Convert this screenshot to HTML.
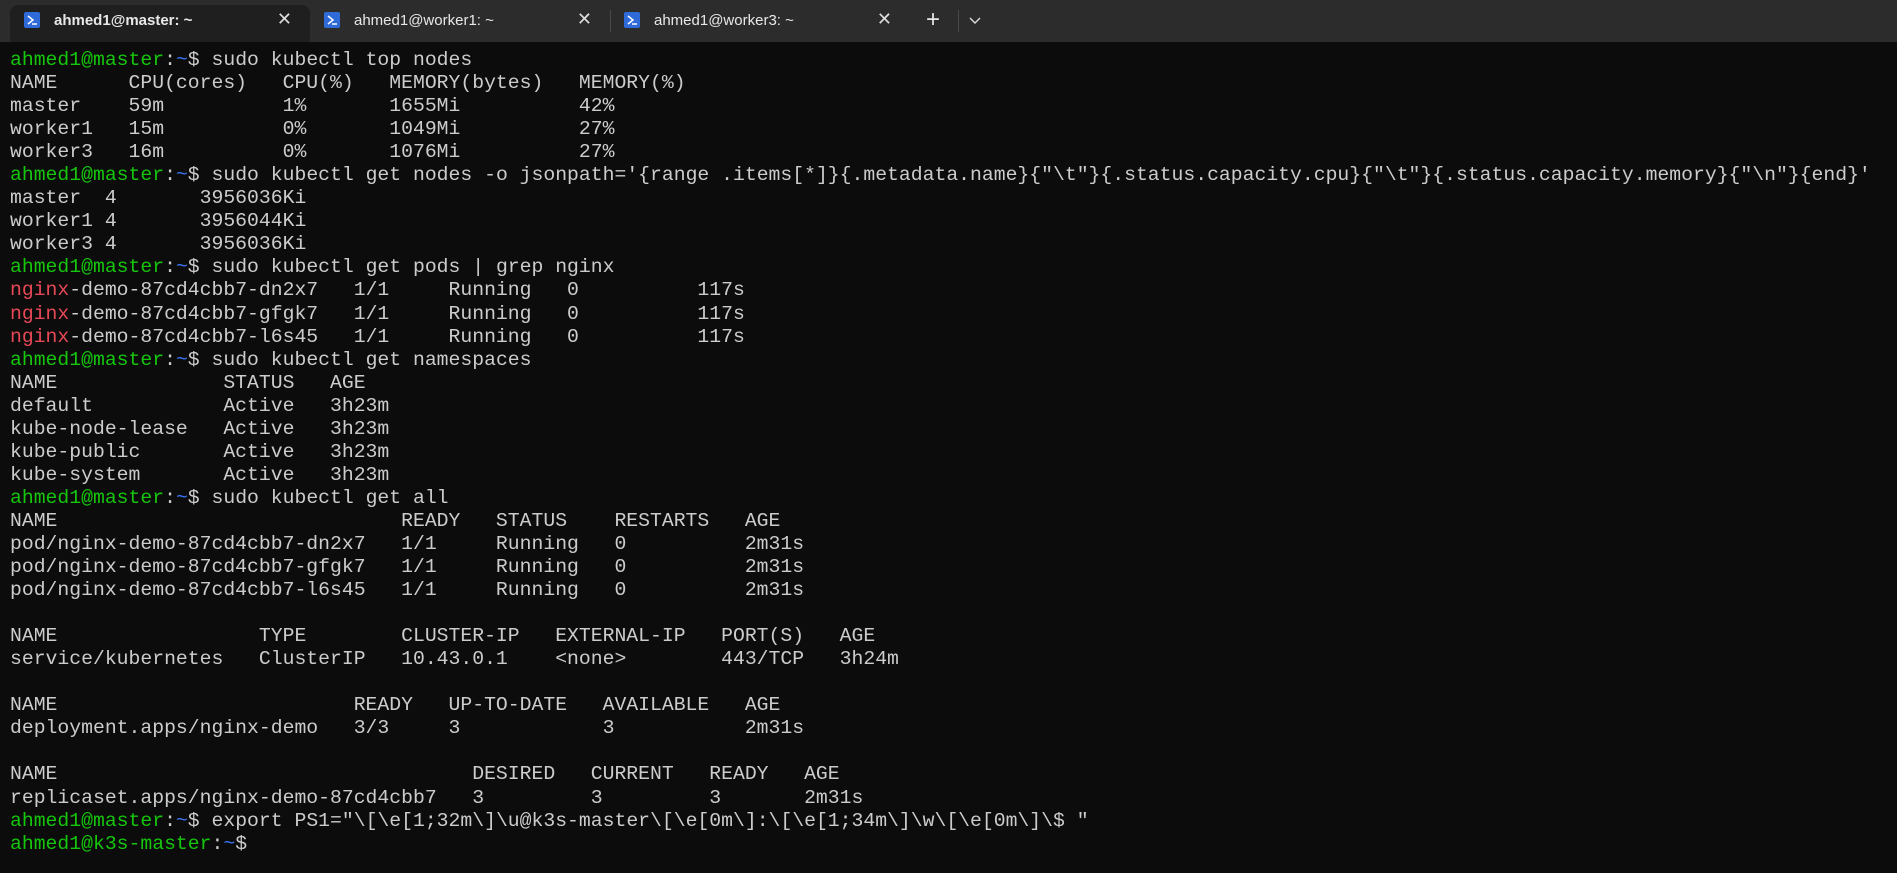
<!DOCTYPE html>
<html><head><meta charset="utf-8"><style>
html,body{margin:0;padding:0;width:1897px;height:873px;overflow:hidden;background:#0c0c0c;}
.bar{position:absolute;left:0;top:0;width:1897px;height:42px;background:#2c2c2c;}
.tab{position:absolute;top:0;height:42px;font-family:"Liberation Sans",sans-serif;font-size:15px;color:#e8e8e8;}
.tab .t{position:absolute;left:44px;top:12px;}
.tab .x{position:absolute;right:18px;top:9px;font-size:18px;color:#ddd;}
.ico{position:absolute;left:14px;top:12px;width:16px;height:16px;background:#2f6bd8;border-radius:2px;}
.ico svg{position:absolute;left:0;top:0}
.act{background:#1f1f1f;border-radius:8px 8px 0 0;top:5px;height:37px;}
.sep{position:absolute;top:10px;width:1px;height:22px;background:#4a4a4a;}
pre{position:absolute;left:10px;top:49px;margin:0;font-family:"Liberation Mono",monospace;font-size:19.75px;line-height:23.05px;color:#cccccc;}
.g{color:#16c60c}.b{color:#3b78ff}.r{color:#e74856}
</style></head><body>
<div class="bar"></div>
<div class="tab act" style="left:10px;width:300px;"><div class="ico" style="top:7px"><svg width="16" height="16"><path d="M4 4l5 4-5 4M8 12h5" stroke="#fff" stroke-width="1.5" fill="none"/></svg></div><span class="t" style="top:7px;font-weight:bold">ahmed1@master: ~</span><span class="x" style="top:4px">✕</span></div>
<div class="tab" style="left:310px;width:300px;"><div class="ico"><svg width="16" height="16"><path d="M4 4l5 4-5 4M8 12h5" stroke="#fff" stroke-width="1.5" fill="none"/></svg></div><span class="t">ahmed1@worker1: ~</span><span class="x">✕</span></div>
<div class="sep" style="left:610px"></div>
<div class="tab" style="left:610px;width:300px;"><div class="ico"><svg width="16" height="16"><path d="M4 4l5 4-5 4M8 12h5" stroke="#fff" stroke-width="1.5" fill="none"/></svg></div><span class="t">ahmed1@worker3: ~</span><span class="x">✕</span></div>
<div class="tab" style="left:926px;width:24px;"><span style="position:absolute;top:6px;font-size:24px;">+</span></div>
<div class="sep" style="left:958px"></div>
<div class="tab" style="left:968px;width:20px;"><svg width="14" height="14" style="position:absolute;top:14px"><path d="M2 4l5 5 5-5" stroke="#ddd" stroke-width="1.4" fill="none"/></svg></div>
<pre><span class="g">ahmed1@master</span>:<span class="b">~</span>$ sudo kubectl top nodes
NAME      CPU(cores)   CPU(%)   MEMORY(bytes)   MEMORY(%)
master    59m          1%       1655Mi          42%
worker1   15m          0%       1049Mi          27%
worker3   16m          0%       1076Mi          27%
<span class="g">ahmed1@master</span>:<span class="b">~</span>$ sudo kubectl get nodes -o jsonpath='{range .items[*]}{.metadata.name}{"\t"}{.status.capacity.cpu}{"\t"}{.status.capacity.memory}{"\n"}{end}'
master  4       3956036Ki
worker1 4       3956044Ki
worker3 4       3956036Ki
<span class="g">ahmed1@master</span>:<span class="b">~</span>$ sudo kubectl get pods | grep nginx
<span class="r">nginx</span>-demo-87cd4cbb7-dn2x7   1/1     Running   0          117s
<span class="r">nginx</span>-demo-87cd4cbb7-gfgk7   1/1     Running   0          117s
<span class="r">nginx</span>-demo-87cd4cbb7-l6s45   1/1     Running   0          117s
<span class="g">ahmed1@master</span>:<span class="b">~</span>$ sudo kubectl get namespaces
NAME              STATUS   AGE
default           Active   3h23m
kube-node-lease   Active   3h23m
kube-public       Active   3h23m
kube-system       Active   3h23m
<span class="g">ahmed1@master</span>:<span class="b">~</span>$ sudo kubectl get all
NAME                             READY   STATUS    RESTARTS   AGE
pod/nginx-demo-87cd4cbb7-dn2x7   1/1     Running   0          2m31s
pod/nginx-demo-87cd4cbb7-gfgk7   1/1     Running   0          2m31s
pod/nginx-demo-87cd4cbb7-l6s45   1/1     Running   0          2m31s

NAME                 TYPE        CLUSTER-IP   EXTERNAL-IP   PORT(S)   AGE
service/kubernetes   ClusterIP   10.43.0.1    &lt;none&gt;        443/TCP   3h24m

NAME                         READY   UP-TO-DATE   AVAILABLE   AGE
deployment.apps/nginx-demo   3/3     3            3           2m31s

NAME                                   DESIRED   CURRENT   READY   AGE
replicaset.apps/nginx-demo-87cd4cbb7   3         3         3       2m31s
<span class="g">ahmed1@master</span>:<span class="b">~</span>$ export PS1="\[\e[1;32m\]\u@k3s-master\[\e[0m\]:\[\e[1;34m\]\w\[\e[0m\]\$ "
<span class="g">ahmed1@k3s-master</span>:<span class="b">~</span>$</pre>
</body></html>
